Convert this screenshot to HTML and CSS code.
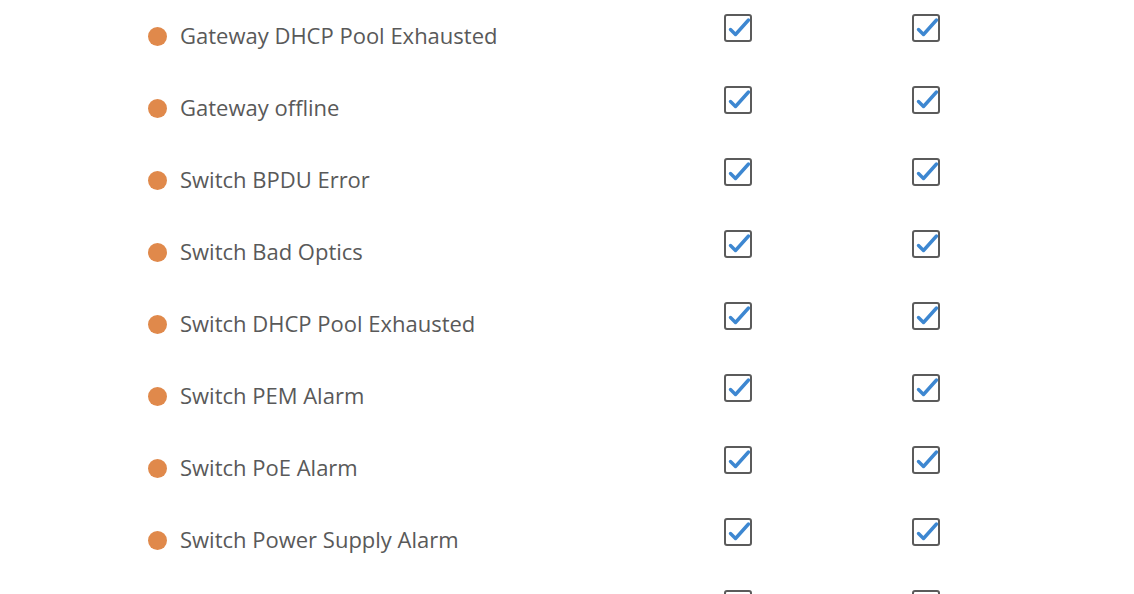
FILE: index.html
```html
<!DOCTYPE html>
<html>
<head>
<meta charset="utf-8">
<link rel="stylesheet" href="styles.css">
</head>
<body>
<div class="list">
  <div class="row"><div class="label"><span class="dot"></span>Gateway DHCP Pool Exhausted</div><div class="cell"><span class="cb"><svg viewBox="0 0 28 28"><path d="M6.5 15.5 L11.5 20.5 L24.5 6"/></svg></span></div><div class="cell"><span class="cb"><svg viewBox="0 0 28 28"><path d="M6.5 15.5 L11.5 20.5 L24.5 6"/></svg></span></div></div>
  <div class="row"><div class="label"><span class="dot"></span>Gateway offline</div><div class="cell"><span class="cb"><svg viewBox="0 0 28 28"><path d="M6.5 15.5 L11.5 20.5 L24.5 6"/></svg></span></div><div class="cell"><span class="cb"><svg viewBox="0 0 28 28"><path d="M6.5 15.5 L11.5 20.5 L24.5 6"/></svg></span></div></div>
  <div class="row"><div class="label"><span class="dot"></span>Switch BPDU Error</div><div class="cell"><span class="cb"><svg viewBox="0 0 28 28"><path d="M6.5 15.5 L11.5 20.5 L24.5 6"/></svg></span></div><div class="cell"><span class="cb"><svg viewBox="0 0 28 28"><path d="M6.5 15.5 L11.5 20.5 L24.5 6"/></svg></span></div></div>
  <div class="row"><div class="label"><span class="dot"></span>Switch Bad Optics</div><div class="cell"><span class="cb"><svg viewBox="0 0 28 28"><path d="M6.5 15.5 L11.5 20.5 L24.5 6"/></svg></span></div><div class="cell"><span class="cb"><svg viewBox="0 0 28 28"><path d="M6.5 15.5 L11.5 20.5 L24.5 6"/></svg></span></div></div>
  <div class="row"><div class="label"><span class="dot"></span>Switch DHCP Pool Exhausted</div><div class="cell"><span class="cb"><svg viewBox="0 0 28 28"><path d="M6.5 15.5 L11.5 20.5 L24.5 6"/></svg></span></div><div class="cell"><span class="cb"><svg viewBox="0 0 28 28"><path d="M6.5 15.5 L11.5 20.5 L24.5 6"/></svg></span></div></div>
  <div class="row"><div class="label"><span class="dot"></span>Switch PEM Alarm</div><div class="cell"><span class="cb"><svg viewBox="0 0 28 28"><path d="M6.5 15.5 L11.5 20.5 L24.5 6"/></svg></span></div><div class="cell"><span class="cb"><svg viewBox="0 0 28 28"><path d="M6.5 15.5 L11.5 20.5 L24.5 6"/></svg></span></div></div>
  <div class="row"><div class="label"><span class="dot"></span>Switch PoE Alarm</div><div class="cell"><span class="cb"><svg viewBox="0 0 28 28"><path d="M6.5 15.5 L11.5 20.5 L24.5 6"/></svg></span></div><div class="cell"><span class="cb"><svg viewBox="0 0 28 28"><path d="M6.5 15.5 L11.5 20.5 L24.5 6"/></svg></span></div></div>
  <div class="row"><div class="label"><span class="dot"></span>Switch Power Supply Alarm</div><div class="cell"><span class="cb"><svg viewBox="0 0 28 28"><path d="M6.5 15.5 L11.5 20.5 L24.5 6"/></svg></span></div><div class="cell"><span class="cb"><svg viewBox="0 0 28 28"><path d="M6.5 15.5 L11.5 20.5 L24.5 6"/></svg></span></div></div>
  <div class="row"><div class="label"><span class="dot"></span>Switch Temperature Alarm</div><div class="cell"><span class="cb"><svg viewBox="0 0 28 28"><path d="M6.5 15.5 L11.5 20.5 L24.5 6"/></svg></span></div><div class="cell"><span class="cb"><svg viewBox="0 0 28 28"><path d="M6.5 15.5 L11.5 20.5 L24.5 6"/></svg></span></div></div>
</div>
</body>
</html>
```
FILE: styles.css
```css
html, body {
  margin: 0;
  padding: 0;
  background: #ffffff;
  overflow: hidden;
}
body {
  font-family: "Open Sans", "Noto Sans", sans-serif;
  color: #595959;
}
.list {
  padding-left: 148px;
}
.row {
  display: grid;
  grid-template-columns: 576px 188px 188px;
  height: 72px;
}
.label {
  display: flex;
  align-items: center;
  gap: 13px;
  font-size: 22px;
  line-height: 30px;
  padding-bottom: 3px;
}
.dot {
  width: 19px;
  height: 19px;
  border-radius: 50%;
  background: #e0894b;
  flex: none;
  margin-top: 4px;
}
.cell {
  padding-top: 14px;
}
.cb {
  display: block;
  box-sizing: border-box;
  width: 28px;
  height: 28px;
  border: 2px solid #5b5b5b;
  border-radius: 3px;
  position: relative;
}
.cb svg {
  position: absolute;
  left: -2px;
  top: -2px;
  width: 28px;
  height: 28px;
  overflow: visible;
}
.cb path {
  fill: none;
  stroke: #3d87d1;
  stroke-width: 3.4;
  stroke-linecap: round;
  stroke-linejoin: round;
}
```
